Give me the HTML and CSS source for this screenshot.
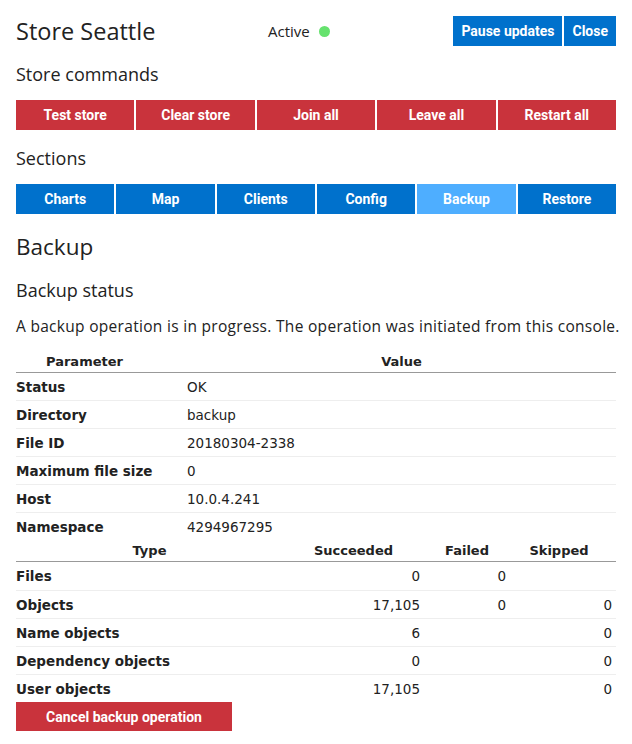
FILE: index.html
```html
<!DOCTYPE html>
<html>
<head>
<meta charset="utf-8">
<link rel="stylesheet" href="styles.css">
</head>
<body>
<div class="topbar">
  <h1 class="title">Store Seattle</h1>
  <div class="status">Active <span class="dot"></span></div>
  <div class="topbtns">
    <button class="btn blue">Pause updates</button>
    <button class="btn blue">Close</button>
  </div>
</div>

<h2 class="sub">Store commands</h2>
<div class="btnrow five">
  <button class="btn red">Test store</button>
  <button class="btn red">Clear store</button>
  <button class="btn red">Join all</button>
  <button class="btn red">Leave all</button>
  <button class="btn red">Restart all</button>
</div>

<h2 class="sub">Sections</h2>
<div class="btnrow six">
  <button class="btn blue">Charts</button>
  <button class="btn blue">Map</button>
  <button class="btn blue">Clients</button>
  <button class="btn blue">Config</button>
  <button class="btn light">Backup</button>
  <button class="btn blue">Restore</button>
</div>

<h1 class="section">Backup</h1>
<h2 class="sub status-h">Backup status</h2>
<p class="msg">A backup operation is in progress. The operation was initiated from this console.</p>

<table class="params">
  <thead>
    <tr><th class="pcol">Parameter</th><th class="vcol">Value</th></tr>
  </thead>
  <tbody>
    <tr><td class="lbl">Status</td><td>OK</td></tr>
    <tr><td class="lbl">Directory</td><td>backup</td></tr>
    <tr><td class="lbl">File ID</td><td>20180304-2338</td></tr>
    <tr><td class="lbl">Maximum file size</td><td>0</td></tr>
    <tr><td class="lbl">Host</td><td>10.0.4.241</td></tr>
    <tr><td class="lbl">Namespace</td><td>4294967295</td></tr>
  </tbody>
</table>

<table class="counts">
  <thead>
    <tr><th class="tcol">Type</th><th class="scol">Succeeded</th><th class="fcol">Failed</th><th class="kcol">Skipped</th></tr>
  </thead>
  <tbody>
    <tr><td class="lbl">Files</td><td class="num">0</td><td class="num">0</td><td class="num"></td></tr>
    <tr><td class="lbl">Objects</td><td class="num">17,105</td><td class="num">0</td><td class="num">0</td></tr>
    <tr><td class="lbl">Name objects</td><td class="num">6</td><td class="num"></td><td class="num">0</td></tr>
    <tr><td class="lbl">Dependency objects</td><td class="num">0</td><td class="num"></td><td class="num">0</td></tr>
    <tr><td class="lbl">User objects</td><td class="num">17,105</td><td class="num"></td><td class="num">0</td></tr>
  </tbody>
</table>

<button class="btn red cancel">Cancel backup operation</button>
</body>
</html>
```

FILE: styles.css
```css
html, body {
  margin: 0;
  padding: 0;
  background: #fff;
}
body {
  padding: 16px;
  font-family: "Open Sans", "Noto Sans", sans-serif;
  color: #222;
  font-size: 14px;
}
.topbar {
  display: grid;
  grid-template-columns: 252px auto 1fr;
  align-items: center;
  height: 30px;
}
.title {
  margin: 0;
  font-size: 23.5px;
  font-weight: 400;
  line-height: 30px;
}
.status {
  font-size: 15px;
  display: flex;
  align-items: center;
  gap: 9px;
}
.dot {
  display: inline-block;
  width: 11px;
  height: 11px;
  border-radius: 50%;
  background: #66e26e;
}
.topbtns {
  display: flex;
  justify-content: flex-end;
  gap: 2px;
}
.btn {
  border: 0;
  margin: 0;
  height: 30px;
  padding: 0 8px;
  color: #fff;
  font-family: "Liberation Sans Narrow", "Roboto", sans-serif;
  font-weight: 700;
  font-size: 14px;
  cursor: pointer;
}
.blue { background: #0071cc; }
.light { background: #4eaeff; }
.red { background: #c9333c; }
.sub {
  margin: 16px 0 14px;
  font-size: 18px;
  font-weight: 400;
  line-height: 24px;
}
.btnrow {
  display: grid;
  gap: 2px;
}
.btnrow.five { grid-template-columns: repeat(5, 1fr); }
.btnrow.six { grid-template-columns: repeat(6, 1fr); }
.section {
  margin: 17px 0 0;
  font-size: 22.5px;
  font-weight: 400;
  line-height: 32px;
}
.status-h {
  margin-top: 15px;
}
.msg {
  margin: 14px 0 14px;
  font-size: 15.5px;
  letter-spacing: 0.3px;
  white-space: nowrap;
  line-height: 20px;
}
table {
  width: 100%;
  border-collapse: collapse;
  font-family: "DejaVu Sans", sans-serif;
  font-size: 13.5px;
}
th {
  font-weight: 700;
  font-size: 13px;
  padding: 0;
  border-bottom: 1px solid #999;
}
td {
  padding: 0;
  height: 27px;
}
tbody tr + tr td {
  border-top: 1px solid #eee;
}
.params thead th { height: 22px; }
.pcol { width: 171px; text-align: left; padding-left: 30px; box-sizing: border-box; }
.vcol { text-align: center; }
.lbl { font-weight: 700; }
.counts thead th { height: 21px; }
.counts tbody tr:first-child td { height: 28px; }
.tcol { width: 267px; text-align: center; }
.scol { width: 141px; text-align: center; }
.fcol { width: 86px; text-align: center; }
.kcol { text-align: center; padding-right: 8px; }
.num { text-align: right; padding-right: 4px; }
.scol + .num { padding-right: 2px; }
.cancel {
  display: block;
  width: 216px;
  height: 29px;
  margin-top: 0;
}
```
